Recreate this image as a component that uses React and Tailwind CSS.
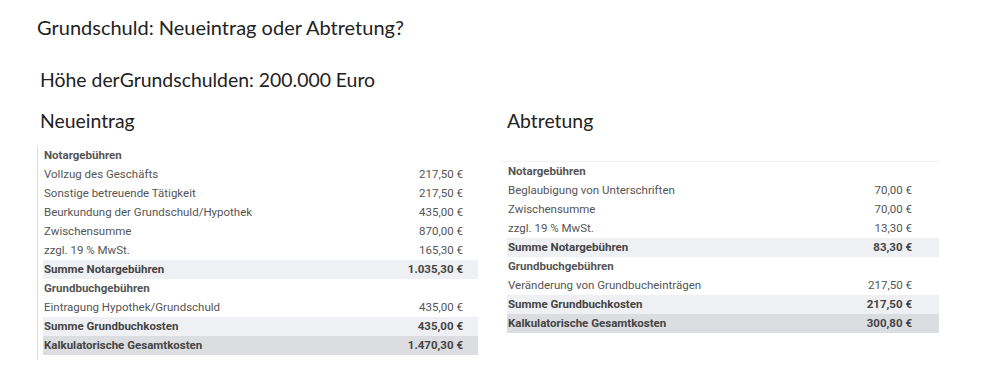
const neueintrag = [
  { label: "Notargebühren", head: true },
  { label: "Vollzug des Geschäfts", value: "217,50 €" },
  { label: "Sonstige betreuende Tätigkeit", value: "217,50 €" },
  { label: "Beurkundung der Grundschuld/Hypothek", value: "435,00 €" },
  { label: "Zwischensumme", value: "870,00 €" },
  { label: "zzgl. 19 % MwSt.", value: "165,30 €" },
  { label: "Summe Notargebühren", value: "1.035,30 €", sum: true },
  { label: "Grundbuchgebühren", head: true },
  { label: "Eintragung Hypothek/Grundschuld", value: "435,00 €" },
  { label: "Summe Grundbuchkosten", value: "435,00 €", sum: true },
  { label: "Kalkulatorische Gesamtkosten", value: "1.470,30 €", total: true },
];

const abtretung = [
  { label: "Notargebühren", head: true },
  { label: "Beglaubigung von Unterschriften", value: "70,00 €" },
  { label: "Zwischensumme", value: "70,00 €" },
  { label: "zzgl. 19 % MwSt.", value: "13,30 €" },
  { label: "Summe Notargebühren", value: "83,30 €", sum: true },
  { label: "Grundbuchgebühren", head: true },
  { label: "Veränderung von Grundbucheinträgen", value: "217,50 €" },
  { label: "Summe Grundbuchkosten", value: "217,50 €", sum: true },
  { label: "Kalkulatorische Gesamtkosten", value: "300,80 €", total: true },
];

function CostTable({ rows, padRight }) {
  return (
    <div className="font-['Roboto',sans-serif] text-[11.5px] text-[#555]">
      {rows.map((row, i) => {
        let cls = "flex h-[19px] items-center pl-[1px] " + padRight;
        if (row.sum) cls += " bg-[#eef0f4] font-bold text-[#444]";
        if (row.total) cls += " bg-[#dcdde1] font-bold text-[#444]";
        if (row.head) cls += " font-bold";
        return (
          <div key={i} className={cls}>
            <span className="flex-1">{row.label}</span>
            {row.value && <span className="whitespace-nowrap">{row.value}</span>}
          </div>
        );
      })}
    </div>
  );
}

export default function App() {
  return (
    <div className="h-[381px] w-[1000px] bg-white font-['Lato',sans-serif] text-[#222]">
      <h1 className="pl-[37px] pt-[13px] text-[20px] leading-[28px]">
        Grundschuld: Neueintrag oder Abtretung?
      </h1>
      <p className="mt-[26px] pl-[40px] text-[19.4px] leading-[26px]">
        Höhe derGrundschulden: 200.000 Euro
      </p>
      <div className="mt-[14px] flex">
        <div className="ml-[37px] w-[441px]">
          <h2 className="pl-[3px] text-[19.4px] leading-[28px]">Neueintrag</h2>
          <div className="mt-[11px] border-l border-[#ddd] pb-[5px] pl-[5px]">
            <CostTable rows={neueintrag} padRight="pr-[15px]" />
          </div>
        </div>
        <div className="ml-[23px] w-[438px]">
          <h2 className="pl-[6px] text-[19.4px] leading-[28px]">Abtretung</h2>
          <div className="mt-[26px] border-t border-[#f3f3f3] pl-[6px]">
            <CostTable rows={abtretung} padRight="pr-[27px]" />
          </div>
        </div>
      </div>
    </div>
  );
}
